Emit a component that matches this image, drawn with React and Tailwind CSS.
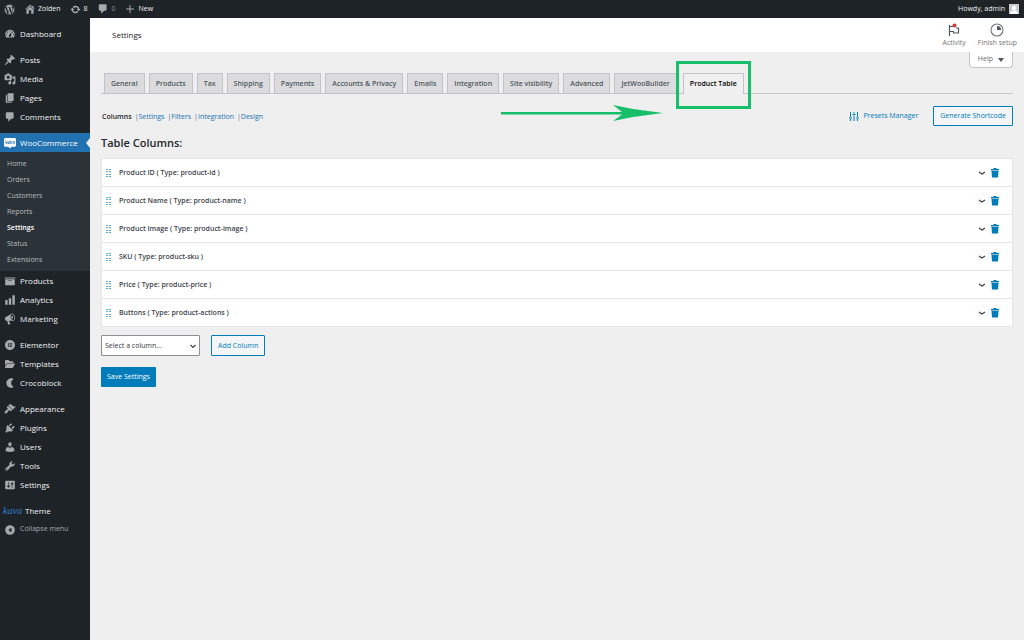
import React from 'react';
import { FaWordpress, FaElementor, FaFolderOpen } from 'react-icons/fa6';

const icons = {
    home: 'M16 8.5l1.53 1.53-1.06 1.06L10 4.6l-6.47 6.49-1.06-1.06L10 2.5l4 4v-2h2v4zm-6-2.46l6 5.99V18h-4v-6H8v6H4v-5.97z',
    update: 'M10.2 3.28c3.53 0 6.43 2.61 6.92 6h2.08l-3.5 4-3.5-4h2.32c-.45-1.97-2.21-3.45-4.32-3.45-1.45 0-2.73.71-3.54 1.78L4.95 5.66C6.23 4.2 8.11 3.28 10.2 3.28zm-.4 13.44c-3.52 0-6.43-2.61-6.92-6H.8l3.5-4c1.17 1.33 2.33 2.67 3.5 4H5.48c.45 1.97 2.21 3.45 4.32 3.45 1.45 0 2.73-.71 3.54-1.78l1.71 1.95c-1.28 1.46-3.15 2.38-5.25 2.38z',
    plus: 'M9 2h2v7h7v2h-7v7H9v-7H2V9h7z',
    dashboard: 'M3.76 16h12.48c1.1-1.37 1.76-3.11 1.76-5 0-4.42-3.58-8-8-8s-8 3.58-8 8c0 1.89.66 3.63 1.76 5zM10 4c.55 0 1 .45 1 1s-.45 1-1 1-1-.45-1-1 .45-1 1-1zM6 6c.55 0 1 .45 1 1s-.45 1-1 1-1-.45-1-1 .45-1 1-1zm8 0c.55 0 1 .45 1 1s-.45 1-1 1-1-.45-1-1 .45-1 1-1zm-5.37 5.55L12 7v6c0 1.1-.9 2-2 2s-2-.9-2-2c0-.57.24-1.08.63-1.45zM4 10c.55 0 1 .45 1 1s-.45 1-1 1-1-.45-1-1 .45-1 1-1zm12 0c.55 0 1 .45 1 1s-.45 1-1 1-1-.45-1-1 .45-1 1-1z',
    post: 'M10.44 3.02l1.82-1.82 6.36 6.35-1.83 1.82c-1.05-.68-2.48-.57-3.41.36l-.75.75c-.92.93-1.04 2.35-.35 3.41l-1.83 1.82-2.41-2.41-2.8 2.79c-.42.42-3.38 2.71-3.8 2.29s1.86-3.39 2.28-3.81l2.79-2.79L4.1 9.36l1.83-1.82c1.05.69 2.48.57 3.4-.36l.75-.75c.93-.92 1.05-2.35.36-3.41z',
    media: 'M13 11V4c0-.55-.45-1-1-1h-1.67L9 1H5L3.67 3H2c-.55 0-1 .45-1 1v7c0 .55.45 1 1 1h10c.55 0 1-.45 1-1zM7 4.5c1.38 0 2.5 1.12 2.5 2.5S8.38 9.5 7 9.5 4.5 8.38 4.5 7 5.62 4.5 7 4.5zM14 6h5v10.5c0 1.38-1.12 2.5-2.5 2.5S14 17.88 14 16.5s1.12-2.5 2.5-2.5c.17 0 .34.02.5.05V9h-3V6zm-4 8.05V13h2v3.5c0 1.38-1.12 2.5-2.5 2.5S7 17.88 7 16.5 8.12 14 9.5 14c.17 0 .34.02.5.05z',
    page: 'M6 15V2h10v13H6zm-1 1h8v2H3V5h2v11z',
    comment: 'M5 2h9c1.1 0 2 .9 2 2v7c0 1.1-.9 2-2 2h-2l-5 5v-5H5c-1.1 0-2-.9-2-2V4c0-1.1.9-2 2-2z',
    archive: 'M19 4v2H1V4h18zM2 7h16v10H2V7zm11 3V9H7v1h6z',
    chart: 'M18 18V2h-4v16h4zm-6 0V7H8v11h4zm-10 0h4v-8H2v8z',
    megaphone: 'M18.15 5.94c.46 1.62.38 3.22-.02 4.48-.42 1.28-1.26 2.18-2.3 2.48-.16.06-.26.06-.4.06-.06.02-.12.02-.18.02-.06.02-.14.02-.22.02h-6.8l2.22 5.5c.02.14-.06.26-.14.34-.08.1-.24.16-.34.16H6.95c-.1 0-.26-.06-.34-.16-.08-.08-.16-.2-.14-.34l-1-5.5H4.25l-.02-.02c-.5.06-1.08-.18-1.54-.62s-.88-1.08-1.06-1.88c-.24-.8-.2-1.56-.02-2.2.18-.62.58-1.08 1.06-1.3l.02-.02 9-5.4c.1-.06.18-.1.24-.16.06-.04.14-.08.24-.12.16-.08.28-.12.5-.18 1.04-.3 2.24.1 3.22.98s1.84 2.24 2.26 3.86zm-2.58 5.98h-.02c.4-.1.74-.34 1.04-.7.58-.7.86-1.76.86-3.04 0-.64-.1-1.3-.28-1.98-.34-1.36-1.02-2.5-1.78-3.24s-1.68-1.1-2.46-.88c-.82.22-1.4.96-1.7 2-.32 1.04-.28 2.36.06 3.72.38 1.36 1 2.5 1.8 3.24.78.74 1.62 1.1 2.48.88zm-2.54-7.08c.22-.04.42-.02.62.04.38.16.76.48 1.02 1s.42 1.2.42 1.78c0 .3-.04.56-.12.8-.18.48-.44.84-.86.94-.34.1-.8-.06-1.14-.4s-.64-.86-.78-1.5c-.18-.62-.12-1.24.02-1.72s.48-.84.82-.94z',
    croco: 'M14.5 2.2C8.5 1 4 5 4 10s4.500 9 10.500 7.800c1-.3 1.200-1.700.3-2.500C11 13 11 7 14.800 4.700c.9-.8.7-2.200-.3-2.500z',
    appearance: 'M14.48 11.06L7.41 3.99l1.5-1.5c.5-.56 2.3-.47 3.51.32 1.21.8 1.43 1.28 2.91 2.1 1.18.64 2.45 1.26 4.45.85zm-.71.71L6.7 4.7 4.93 6.47c-.39.39-.39 1.02 0 1.41l1.06 1.06c.39.39.39 1.03 0 1.42-.6.6-1.43 1.11-2.21 1.69-.35.26-.7.53-1.01.84C1.43 14.23.4 16.08 1.4 17.07c.99 1 2.84-.03 4.18-1.36.31-.31.58-.66.85-1.02.57-.78 1.08-1.61 1.69-2.21.39-.39 1.02-.39 1.41 0l1.06 1.06c.39.39 1.02.39 1.41 0z',
    plugins: 'M13.11 4.36L9.87 7.6 8 5.73l3.24-3.24c.35-.34 1.05-.2 1.56.32.52.51.66 1.21.31 1.55zm-8 1.77l.91-1.12 9.01 9.01-1.19.84c-.71.71-2.63 1.16-3.82 1.16H6.14L4.9 17.26c-.59.59-1.54.59-2.12 0-.59-.58-.59-1.53 0-2.12l1.24-1.24v-3.88c0-1.13.4-3.19 1.09-3.89zm7.26 3.97l3.24-3.24c.34-.35 1.04-.21 1.55.31.52.51.66 1.21.31 1.55l-3.24 3.25z',
    users: 'M10 9.25c-2.27 0-2.73-3.44-2.73-3.44C7 4.02 7.82 2 9.97 2c2.16 0 2.98 2.02 2.71 3.81 0 0-.41 3.44-2.68 3.44zm0 2.57L12.72 10c2.39 0 4.52 2.33 4.52 4.53v2.49s-3.65 1.13-7.24 1.13c-3.65 0-7.24-1.13-7.24-1.13v-2.49c0-2.25 1.94-4.48 4.47-4.48z',
    tools: 'M16.68 9.77c-1.34 1.34-3.3 1.67-4.95.99l-5.41 6.52c-.99.99-2.59.99-3.58 0s-.99-2.59 0-3.57l6.52-5.42c-.68-1.65-.35-3.61.99-4.95 1.28-1.28 3.12-1.62 4.72-1.06l-2.89 2.89 2.82 2.82 2.86-2.87c.53 1.58.18 3.39-1.08 4.65zM3.81 16.21c.4.39 1.04.39 1.43 0 .4-.4.4-1.04 0-1.43-.39-.4-1.03-.4-1.43 0-.39.39-.39 1.03 0 1.43z',
    settings: 'M18 16V4c0-.55-.45-1-1-1H3c-.55 0-1 .45-1 1v12c0 .55.45 1 1 1h14c.55 0 1-.45 1-1zM8 11h1c.55 0 1 .45 1 1s-.45 1-1 1H8v1.5c0 .28-.22.5-.5.5s-.5-.22-.5-.5V13H6c-.55 0-1-.45-1-1s.45-1 1-1h1V5.5c0-.28.22-.5.5-.5s.5.22.5.5V11zm5-2h-1c-.55 0-1-.45-1-1s.45-1 1-1h1V5.5c0-.28.22-.5.5-.5s.5.22.5.5V7h1c.55 0 1 .45 1 1s-.45 1-1 1h-1v5.5c0 .28-.22.5-.5.5s-.5-.22-.5-.5V9z',
    collapse: 'M10 2a8 8 0 1 0 0 16a8 8 0 0 0 0-16zM12.500 6v8L7 10z',
    trash: 'M7 0h6v2h5v3H2V2h5zM3 6h14l-1 13H4z',
};

const Icon = ({ name, className }) => (
    <svg viewBox="0 0 20 20" fill="currentColor" fillRule="evenodd" className={className} aria-hidden="true">
        <path d={icons[name]} />
    </svg>
);

const WooIcon = () => (
    <svg viewBox="0 0 22 20" className="w-3 h-3 shrink-0" aria-hidden="true">
        <path d="M2.500 1h17A2.500 2.500 0 0 1 22 3.500v11a2.500 2.500 0 0 1-2.500 2.500H14l-3 3-3-3H2.500A2.500 2.500 0 0 1 0 14.500v-11A2.500 2.500 0 0 1 2.500 1z" fill="#fff" />
        <path d="M3 6l1.500 6L7 7.500 9 12l1-6" fill="none" stroke="#2271b1" strokeWidth="1.400" />
        <ellipse cx="13" cy="9" rx="1.500" ry="2.500" fill="none" stroke="#2271b1" strokeWidth="1.300" />
        <ellipse cx="18" cy="9" rx="1.500" ry="2.500" fill="none" stroke="#2271b1" strokeWidth="1.300" />
    </svg>
);

const menuGroups = [
    [{ label: 'Dashboard', icon: 'dashboard' }],
    [
        { label: 'Posts', icon: 'post' },
        { label: 'Media', icon: 'media' },
        { label: 'Pages', icon: 'page' },
        { label: 'Comments', icon: 'comment' },
    ],
    [
        {
            label: 'WooCommerce',
            icon: 'woo',
            children: ['Home', 'Orders', 'Customers', 'Reports', 'Settings', 'Status', 'Extensions'],
        },
        { label: 'Products', icon: 'archive' },
        { label: 'Analytics', icon: 'chart' },
        { label: 'Marketing', icon: 'megaphone' },
    ],
    [
        { label: 'Elementor', icon: 'elementor' },
        { label: 'Templates', icon: 'templates' },
        { label: 'Crocoblock', icon: 'croco' },
    ],
    [
        { label: 'Appearance', icon: 'appearance' },
        { label: 'Plugins', icon: 'plugins' },
        { label: 'Users', icon: 'users' },
        { label: 'Tools', icon: 'tools' },
        { label: 'Settings', icon: 'settings' },
    ],
];

const tabs = [
    'General', 'Products', 'Tax', 'Shipping', 'Payments', 'Accounts & Privacy', 'Emails',
    'Integration', 'Site visibility', 'Advanced', 'JetWooBuilder', 'Product Table',
];

const sections = ['Columns', 'Settings', 'Filters', 'Integration', 'Design'];

const columns = [
    { name: 'Product ID', type: 'product-id' },
    { name: 'Product Name', type: 'product-name' },
    { name: 'Product Image', type: 'product-image' },
    { name: 'SKU', type: 'product-sku' },
    { name: 'Price', type: 'product-price' },
    { name: 'Buttons', type: 'product-actions' },
];

const MenuIcon = ({ name }) => {
    if (name === 'woo') return <WooIcon />;
    if (name === 'elementor') return <FaElementor className="w-[10px] h-[10px] shrink-0" />;
    if (name === 'templates') return <FaFolderOpen className="w-[10px] h-[10px] shrink-0" />;
    return <Icon name={name} className="w-3 h-3 shrink-0" />;
};

const AdminBar = () => (
    <header className="flex items-center justify-between h-[18px] pl-1 pr-[5px] bg-[#1d2327] text-[#f0f0f1] text-[7px]">
        <nav className="flex items-center gap-[9px]" aria-label="Toolbar">
            <a href="#wp" aria-label="About WordPress" className="text-[#a7aaad]">
                <FaWordpress className="w-[11px] h-[11px]" />
            </a>
            <a href="#site" className="flex items-center gap-[2px]">
                <Icon name="home" className="w-3 h-3 text-[#a7aaad]" />
                Zolden
            </a>
            <a href="#updates" className="flex items-center gap-[3px]">
                <Icon name="update" className="w-[11px] h-[11px] text-[#a7aaad]" />
                8
            </a>
            <a href="#comments" className="flex items-center gap-[3px] text-[#a7aaad]">
                <Icon name="comment" className="w-3 h-3" />
                <span className="text-[#8c9196]">0</span>
            </a>
            <a href="#new" className="flex items-center gap-1">
                <Icon name="plus" className="w-[10px] h-[10px] text-[#a7aaad]" />
                New
            </a>
        </nav>
        <a href="#profile" className="flex items-center gap-1">
            Howdy, admin
            <svg viewBox="0 0 20 20" className="w-[10px] h-[10px]" aria-hidden="true">
                <rect width="20" height="20" fill="#c9cbce" />
                <ellipse cx="10" cy="8" rx="4" ry="5" fill="#fff" />
                <path d="M2 20c0-5 4-7 8-7s8 2 8 7z" fill="#fff" />
            </svg>
        </a>
    </header>
);

const MenuItem = ({ item }) => (
    <li>
        <a
            href="#menu"
            className={`relative flex items-center gap-[5px] h-[19px] pl-[5px] ${
                item.children ? 'bg-[#2271b1] text-white' : 'text-[#f0f0f1]'
            }`}
        >
            <span className={`flex justify-center w-[10px] ${item.children ? '' : 'text-[#a7aaad]'}`}>
                <MenuIcon name={item.icon} />
            </span>
            {item.label}
            {item.children && (
                <span className="absolute right-0 top-[5px] border-y-[5px] border-y-transparent border-r-[4px] border-r-[#efefef]" />
            )}
        </a>
        {item.children && (
            <ul className="pt-1 pb-[3px] bg-[#2c3338] text-[7px]">
                {item.children.map(child => (
                    <li key={child}>
                        <a
                            href="#submenu"
                            className={`flex items-center h-4 pl-[7px] ${
                                child === 'Settings' ? 'text-white font-semibold' : 'text-[#b5b9bd]'
                            }`}
                        >
                            {child}
                        </a>
                    </li>
                ))}
            </ul>
        )}
    </li>
);

const Sidebar = () => (
    <aside className="flex flex-col gap-[7px] w-[90px] shrink-0 pt-[6px] bg-[#1d2327] text-[8px]">
        {menuGroups.map(group => (
            <ul key={group[0].label}>
                {group.map(item => (
                    <MenuItem key={item.label} item={item} />
                ))}
            </ul>
        ))}
        <div>
            <a href="#theme" className="flex items-center gap-1 h-[19px] pl-[3px] text-[#f0f0f1]">
                <span className="w-[18px] font-['Liberation_Serif',serif] italic text-[10px] text-[#2f7fd0]">kava</span>
                Theme
            </a>
            <button type="button" className="flex items-center gap-1 h-[19px] pl-1 text-[#a7aaad] text-[7px]">
                <Icon name="collapse" className="w-3 h-3" />
                Collapse menu
            </button>
        </div>
    </aside>
);

const PageHeader = () => (
    <div className="flex items-center justify-between h-[34px] pl-[22px] pr-[7px] bg-white">
        <h1 className="text-[8px] font-medium text-[#1e1e1e]">Settings</h1>
        <div className="flex gap-3 text-[7px] text-[#757575]">
            <button type="button" className="flex flex-col items-center">
                <svg viewBox="0 0 28 28" className="w-[14px] h-[14px]" fill="none" stroke="#50575e" strokeWidth="2.400" aria-hidden="true">
                    <path d="M5 4v22M5 7h7M18 10h5v10H13v-3H5" />
                    <circle cx="15" cy="5" r="4" fill="#d63638" stroke="none" />
                </svg>
                <span className="leading-[11px]">Activity</span>
            </button>
            <button type="button" className="flex flex-col items-center">
                <svg viewBox="0 0 28 28" className="w-[14px] h-[14px]" aria-hidden="true">
                    <circle cx="14" cy="14" r="12" fill="none" stroke="#757575" strokeWidth="2.200" />
                    <path d="M14 6a8 8 0 0 1 8 8h-8z" fill="#50575e" />
                </svg>
                <span className="leading-[11px]">Finish setup</span>
            </button>
        </div>
    </div>
);

const Tabs = () => (
    <nav className="flex gap-1 pl-[3px] border-b border-[#c3c4c7] text-[7px] font-semibold" aria-label="Settings tabs">
        {tabs.map(tab =>
            tab === 'Product Table' ? (
                <div key={tab} className="relative ml-[2px]">
                    <a
                        href="#tab"
                        aria-current="page"
                        className="flex items-center h-[21px] -mb-px px-[6px] pt-px border border-b-0 border-[#c3c4c7] bg-[#f0f0f1] text-black whitespace-nowrap"
                    >
                        {tab}
                    </a>
                    <span className="absolute -inset-x-[7px] -top-3 -bottom-4 border-[3px] border-[#18bf6b]" />
                    <svg viewBox="0 0 162 16" className="absolute right-full top-8 mr-5 w-[162px] h-4" fill="#18bf6b" aria-hidden="true">
                        <path d="M0 7h121L112 0l20 4 30 4-30 4-20 4 9-6.500H0z" />
                    </svg>
                </div>
            ) : (
                <a
                    key={tab}
                    href="#tab"
                    className="flex items-center h-5 px-[6px] pt-px border border-b-0 border-[#c3c4c7] bg-[#dcdcde] text-[#50575e] whitespace-nowrap"
                >
                    {tab}
                </a>
            )
        )}
    </nav>
);

const ColumnRow = ({ column }) => (
    <li className="flex items-center h-7 pl-1 pr-3 border-b border-[#e5e5e5]">
        <svg viewBox="0 0 5 8" className="w-[5px] h-2 mr-2" fill="#5aa9cf" aria-hidden="true">
            <path d="M0 0h2v1H0zM3 0h2v1H3zM0 2h2v1H0zM3 2h2v1H3zM0 5h2v1H0zM3 5h2v1H3zM0 7h2v1H0zM3 7h2v1H3z" />
        </svg>
        <span className="flex-1 pt-[2px]">{`${column.name} ( Type: ${column.type} )`}</span>
        <button type="button" aria-label={`Expand ${column.name}`} className="mr-1">
            <svg viewBox="0 0 8 8" className="w-2 h-2" fill="none" stroke="#3c434a" strokeWidth="1.200" aria-hidden="true">
                <path d="M1 3l3 2 3-2" />
            </svg>
        </button>
        <button type="button" aria-label={`Delete ${column.name}`} className="text-[#007cba]">
            <Icon name="trash" className="w-[10px] h-[10px]" />
        </button>
    </li>
);

const App = () => {
    return (
        <div className="flex flex-col min-h-screen bg-[#efefef] font-['Open_Sans','Noto_Sans',sans-serif] text-[#3c434a]">
            <AdminBar />
            <div className="flex flex-1">
                <Sidebar />
                <main className="flex-1 min-w-0">
                    <PageHeader />
                    <div className="px-[11px]">
                        <div className="flex justify-end">
                            <button
                                type="button"
                                className="flex items-center gap-[5px] h-4 px-2 border border-t-0 border-[#c3c4c7] rounded-b-sm bg-white text-[7px] text-[#646970]"
                            >
                                Help <span className="border-x-[3px] border-x-transparent border-t-[4px] border-t-[#50575e]" />
                            </button>
                        </div>
                        <div className="pt-[5px]">
                            <Tabs />
                        </div>

                        <div className="flex items-center justify-between mt-3 text-[7px]">
                            <ul className="flex gap-[3px] pl-px pt-[3px]">
                                {sections.map((section, i) => (
                                    <li key={section}>
                                        {i > 0 && <span className="text-[#646970]">|</span>}
                                        <a
                                            href="#section"
                                            className={i === 0 ? 'font-semibold text-[#1d2327]' : 'text-[#2271b1]'}
                                        >
                                            {section}
                                        </a>
                                    </li>
                                ))}
                            </ul>
                            <div className="flex items-center gap-[15px] text-[#007cba]">
                                <button type="button" className="flex items-center gap-1 pt-px">
                                    <svg viewBox="0 0 20 18" className="w-[10px] h-[9px]" fill="none" stroke="currentColor" strokeWidth="2" aria-hidden="true">
                                        <path d="M3 0v10M3 14v4M10 0v3M10 7v11M17 0v10M17 14v4M0 12h6M7 5h6M14 12h6" />
                                    </svg>
                                    Presets Manager
                                </button>
                                <button type="button" className="h-5 px-[6px] pt-px border border-[#007cba] rounded-[1px] bg-[#f3f5f6]">
                                    Generate Shortcode
                                </button>
                            </div>
                        </div>

                        <h2 className="mt-[9px] text-[11px] leading-4 font-semibold text-[#23282d]">Table Columns:</h2>

                        <ul className="mt-[7px] border-x border-t border-[#e5e5e5] bg-white text-[7px] font-semibold">
                            {columns.map(column => (
                                <ColumnRow key={column.type} column={column} />
                            ))}
                        </ul>

                        <div className="flex items-center gap-[11px] mt-2 text-[7px]">
                            <div className="relative w-[99px]">
                                <select
                                    aria-label="Select a column"
                                    className="appearance-none block w-full h-[21px] px-[3px] pt-px border border-[#8c8f94] rounded-[1px] bg-white text-[#32373c]"
                                >
                                    <option>Select a column...</option>
                                </select>
                                <svg viewBox="0 0 8 8" className="absolute right-[3px] top-[7px] w-2 h-2 pointer-events-none" fill="none" stroke="#3c434a" strokeWidth="1.200" aria-hidden="true">
                                    <path d="M1.500 3L4 5.500 6.500 3" />
                                </svg>
                            </div>
                            <button type="button" className="h-[21px] px-[6px] pt-px border border-[#007cba] rounded-[1px] bg-[#f3f5f6] text-[#007cba]">
                                Add Column
                            </button>
                        </div>

                        <button type="button" className="h-5 mt-[11px] px-[6px] pt-px rounded-[1px] bg-[#007cba] text-[7px] text-white">
                            Save Settings
                        </button>
                    </div>
                </main>
            </div>
        </div>
    );
};

export default App;
